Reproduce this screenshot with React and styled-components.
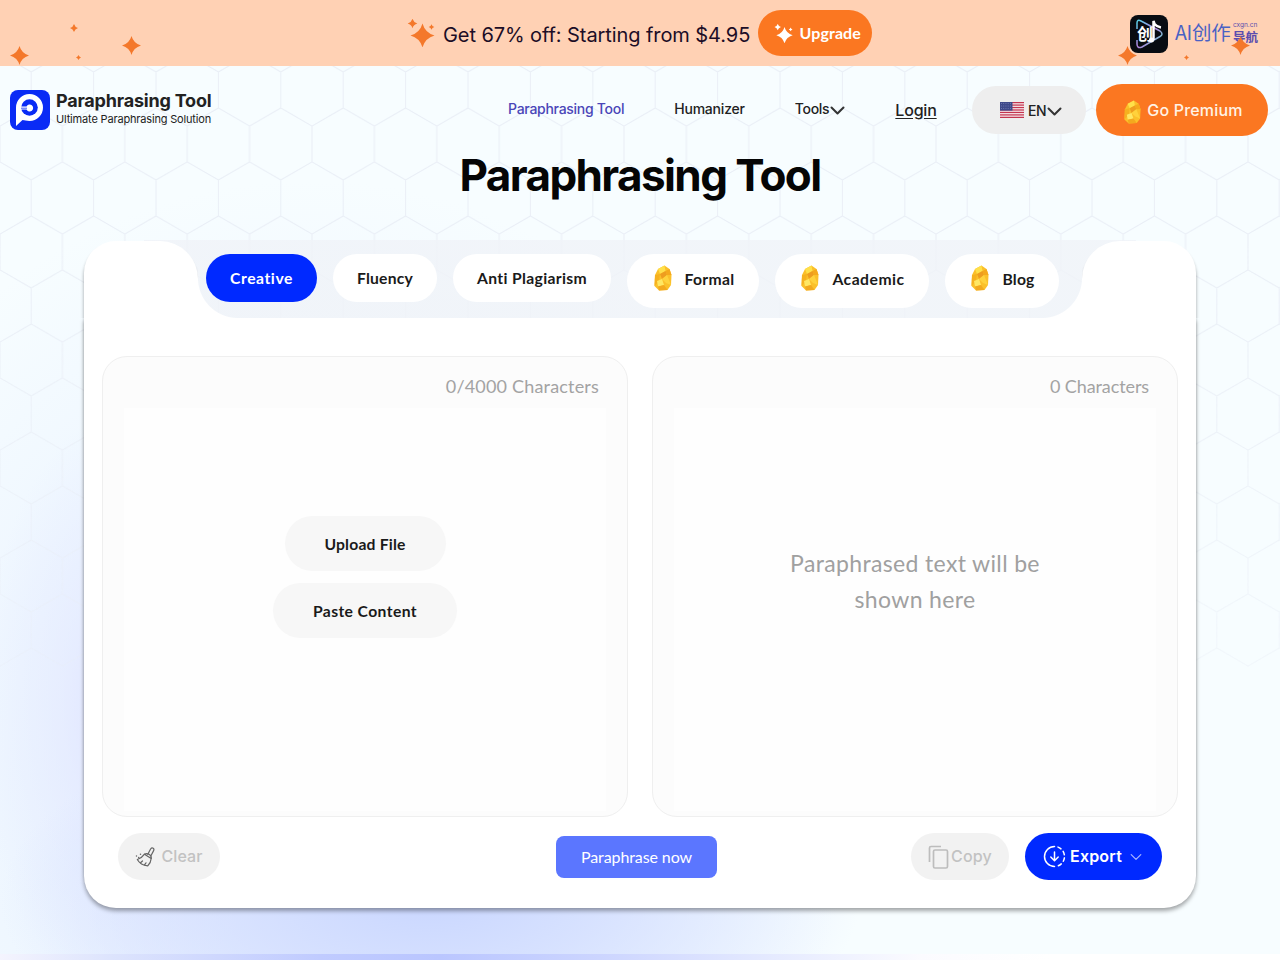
import React from "react";
import styled, { createGlobalStyle } from "styled-components";

const GlobalStyle = createGlobalStyle`
  * {
    box-sizing: border-box;
  }
  body {
    margin: 0;
    overflow: hidden;
    font-family: "Inter", "Liberation Sans", sans-serif;
    color: #222;
  }
  button {
    border: 0;
    padding: 0;
    font-family: inherit;
    cursor: pointer;
  }
  svg {
    display: block;
    flex: none;
  }
`;

/* the text faces used over and over */
const Text = styled.span`
  font-family: ${(p) => (p.$round ? '"Lato"' : '"Inter"')}, sans-serif;
  font-size: ${(p) => p.$size}px;
  font-weight: ${(p) => p.$weight || 400};
  letter-spacing: ${(p) => p.$track || 0}px;
  line-height: ${(p) => p.$line || 20}px;
  color: ${(p) => p.$color || "inherit"};
  white-space: nowrap;
`;

const Page = styled.div`
  position: relative;
  z-index: 0;
  width: 1280px;
  height: 960px;
  overflow: hidden;
  display: flex;
  flex-direction: column;
  background:
    radial-gradient(ellipse 430px 190px at 430px 900px, #cad7ff 0%, rgba(210, 221, 255, 0.8) 40%, rgba(232, 240, 255, 0) 100%),
    radial-gradient(ellipse 150px 300px at 130px 710px, #dfe3ff 0%, rgba(226, 231, 255, 0.55) 45%, rgba(236, 244, 255, 0) 100%),
    radial-gradient(ellipse 540px 600px at 310px 780px, #dfe8ff 0%, rgba(234, 243, 255, 0.8) 50%, rgba(247, 253, 255, 0) 100%),
    #f7fdff;
`;

const Backdrop = styled.svg`
  position: absolute;
  z-index: -1;
  top: 66px;
  left: 0;
`;

const Banner = styled.div`
  position: relative;
  height: 66px;
  padding: 0 0 0 407px;
  display: flex;
  align-items: center;
  background: #ffd1b4;
`;

const BannerText = styled(Text)`
  margin: 3px 8px 0 8px;
`;

const Upgrade = styled.button`
  width: 114px;
  height: 46px;
  border-radius: 23px;
  background: #fb7721;
  color: #fff;
  display: flex;
  align-items: center;
  justify-content: center;
  gap: 6px;
  padding-left: 5px;
`;

const Spark = styled.svg`
  position: absolute;
  left: ${(p) => p.$x}px;
  top: ${(p) => p.$y}px;
`;

const Partner = styled.div`
  margin-left: auto;
  margin-right: 22px;
  display: flex;
  align-items: center;
  gap: 7px;
  padding-top: 2px;
`;

const PartnerName = styled.div`
  width: 83px;
  display: flex;
  align-items: center;
  justify-content: space-between;
  color: #4a62c4;
  font-family: "Noto Sans CJK SC", sans-serif;
  font-size: 19.5px;
  line-height: 26px;
  letter-spacing: -0.3px;
  white-space: nowrap;
  padding-bottom: 5px;
`;

const PartnerSub = styled.div`
  display: flex;
  flex-direction: column;
  width: 25px;
  padding-top: 2px;
  letter-spacing: 0;
  font-weight: 700;
  font-size: 12.5px;
  line-height: 15px;
  color: #5a4cae;
  small {
    font-family: "Inter", sans-serif;
    font-weight: 400;
    font-size: 6.5px;
    line-height: 8px;
  }
`;

const Header = styled.header`
  height: 86px;
  padding: 2px 12px 0 10px;
  display: flex;
  align-items: center;
`;

const Brand = styled.div`
  display: flex;
  align-items: center;
  gap: 6px;
  width: 498px;
`;

const BrandText = styled.div`
  display: flex;
  flex-direction: column;
  margin-top: -3px;
`;

const Nav = styled.nav`
  display: flex;
  align-items: center;
  gap: 50px;
  flex: 1;
  padding-bottom: 2px;
`;

const NavItem = styled(Text)`
  display: flex;
  align-items: center;
  gap: 1px;
  svg {
    margin-top: 3px;
  }
`;

const Login = styled(Text)`
  padding-top: 1px;
  text-decoration: underline;
  text-underline-offset: 2px;
`;

const Language = styled.button`
  width: 114px;
  height: 48px;
  margin-right: 10px;
  padding-left: 4px;
  border-radius: 24px;
  background: #eeeeee;
  display: flex;
  align-items: center;
  justify-content: center;
  color: #222;
  span {
    margin: 1px 0 0 4px;
  }
  svg:last-child {
    margin: 3px 0 0 1px;
  }
`;

const Premium = styled.button`
  width: 172px;
  height: 52px;
  border-radius: 26px;
  background: #fb7721;
  display: flex;
  align-items: center;
  justify-content: center;
  gap: 5px;
  svg {
    margin: 3px 0 0 2px;
  }
`;

const Title = styled.h1`
  margin: 0;
  height: 88px;
  text-align: center;
  font-size: 44px;
  font-weight: 700;
  line-height: 46px;
  letter-spacing: -1.6px;
  color: #050505;
`;

const Card = styled.main`
  width: 1112px;
  margin: 0 auto;
`;

const Top = styled.div`
  height: 78px;
  display: flex;
  background: linear-gradient(rgba(240, 243, 248, 0.8), rgba(240, 243, 248, 0.8)) 60px 0 / 992px 78px no-repeat;
`;

const Ear = styled.div`
  width: 114px;
  height: 77px;
  margin-top: 1px;
  background: #fff;
  border-radius: ${(p) => (p.$right ? "38px 32px 0 0" : "32px 38px 0 0")};
  box-shadow: ${(p) => (p.$right ? "0.5px" : "-0.5px")} 4px 3px rgba(0, 0, 0, 0.22);
  clip-path: ${(p) => (p.$right ? "inset(0 -4px 0 0)" : "inset(0 0 0 -4px)")};
`;

/* the tab strip is cut into the card; both lower corners are filled in white */
const Tabs = styled.div`
  flex: 1;
  display: flex;
  align-items: flex-start;
  gap: 16px;
  padding: 14px 0 0 8px;
  background:
    radial-gradient(circle at 40px 0, transparent 39.5px, #fff 40.5px) left bottom / 40px 40px no-repeat,
    radial-gradient(circle at 0 0, transparent 39.5px, #fff 40.5px) right bottom / 40px 40px no-repeat;
`;

const Tab = styled.button`
  width: ${(p) => p.$width}px;
  height: ${(p) => (p.$gem ? 54 : 48)}px;
  padding: ${(p) => (p.$gem ? "0 0 4px 1px" : "0")};
  border-radius: 27px;
  background: ${(p) => (p.$active ? "#0029ff" : "#fff")};
  color: ${(p) => (p.$active ? "#fff" : "#1a1a1a")};
  display: flex;
  align-items: center;
  justify-content: center;
  gap: 12px;
  svg {
    margin-top: -2px;
  }
`;

const Body = styled.div`
  height: 590px;
  padding: 38px 18px 0;
  background: #fff;
  border-radius: 0 0 32px 32px;
  box-shadow: 0 3px 4px rgba(0, 0, 0, 0.35), 0 -5px 3px rgba(0, 0, 0, 0.2);
  clip-path: inset(0 -8px -12px -8px);
`;

const Panels = styled.div`
  display: grid;
  grid-template-columns: 1fr 1fr;
  gap: 24px;
`;

const Panel = styled.section`
  height: 461px;
  padding: 0 21px 5px;
  border: 1px solid #efefef;
  border-radius: 25px;
  background: #fcfcfc;
  display: flex;
  flex-direction: column;
`;

const Count = styled.div`
  height: 51px;
  padding: 19px 7px 0 0;
  text-align: right;
`;

const Area = styled.div`
  flex: 1;
  background: #fefefe;
  display: flex;
  flex-direction: column;
  align-items: center;
  gap: 12px;
  padding-top: ${(p) => p.$top}px;
  text-align: center;
`;

const SoftButton = styled.button`
  width: ${(p) => p.$width}px;
  height: 55px;
  border-radius: 28px;
  background: #f7f7f7;
  color: #1a1a1a;
`;

const Actions = styled.div`
  display: flex;
  align-items: center;
  padding: 16px 16px 0;
`;

const Pill = styled.button`
  width: ${(p) => p.$width}px;
  height: 47px;
  border-radius: 24px;
  background: ${(p) => (p.$primary ? "#0029ff" : "#f2f2f2")};
  color: ${(p) => (p.$primary ? "#fff" : "#c2c2c2")};
  display: flex;
  align-items: center;
  justify-content: center;
  gap: ${(p) => p.$gap}px;
  span {
    margin-top: -1px;
  }
`;

const ExportPill = styled(Pill)`
  margin-left: 16px;
  justify-content: flex-start;
  padding-left: 18px;
  svg:last-child {
    margin-left: 4px;
  }
`;

const Paraphrase = styled.button`
  width: 161px;
  height: 42px;
  margin: 0 194px 0 336px;
  border-radius: 8px;
  background: #5b76ff;
  color: #fff;
`;

const Strip = styled.div`
  position: absolute;
  left: 0;
  bottom: 0;
  width: 100%;
  height: 6px;
  background: linear-gradient(90deg, #f4f4fe 0, #dde4fd 110px, #c0cbff 320px, #bac6ff 440px, #ccd5ff 600px, #e6ebff 780px, #fbfbff 920px, #fff 1050px);
`;

const star = (x, y, r) => {
  const k = r * 0.22;
  return `M${x} ${y - r}Q${x + k} ${y - k} ${x + r} ${y}Q${x + k} ${y + k} ${x} ${y + r}Q${x - k} ${y + k} ${x - r} ${y}Q${x - k} ${y - k} ${x} ${y - r}Z`;
};

const Sparkles = ({ size, color }) => (
  <svg width={size} height={size} viewBox="0 0 28 28" fill={color}>
    <path d={star(15.5, 16.5, 12)} />
    <path d={star(5.5, 4.5, 4.8)} />
    <path d={star(24.5, 8, 2.8)} />
  </svg>
);

const Star = ({ x, y, r }) => (
  <Spark $x={x - r} $y={y - r} width={r * 2} height={r * 2} viewBox={`0 0 ${r * 2} ${r * 2}`} fill="#f4782b">
    <path d={star(r, r, r)} />
  </Spark>
);

const Hexagons = () => (
  <Backdrop width="1280" height="601">
    <defs>
      <pattern id="hex" width="62.4" height="108" x="0" y="6" patternUnits="userSpaceOnUse">
        <path
          d="M31.2 0V36L62.4 54V90L31.2 108M31.2 36L0 54V90L31.2 108M0 -18L31.2 0L62.4 -18"
          fill="none"
          stroke="#e9eef6"
          strokeWidth="1"
        />
      </pattern>
      <linearGradient id="fade" x2="0" y2="1">
        <stop offset="0.3" stopColor="#fff" />
        <stop offset="1" stopColor="#fff" stopOpacity="0.4" />
      </linearGradient>
      <mask id="fadeMask">
        <rect width="1280" height="601" fill="url(#fade)" />
      </mask>
    </defs>
    <rect width="1280" height="601" fill="url(#hex)" mask="url(#fadeMask)" />
  </Backdrop>
);

const LogoMark = () => (
  <svg width="40" height="40" viewBox="0 0 40 40">
    <rect width="40" height="40" rx="8" fill="#0a2bf5" />
    <path d="M6 36V17.5A13.5 13.5 0 1 1 19.5 31C16.500 31 14.500 30 12.500 30Z" fill="#fff" />
    <circle cx="19.500" cy="17.500" r="8.300" fill="#0a2bf5" />
    <path d="M11 16.500H16.500A3.500 3.500 0 1 1 16.500 19.500H11Z" fill="#fff" />
    <path d="M11 18.200H17" stroke="#0a2bf5" strokeWidth="0.800" />
  </svg>
);

const Gem = ({ width = 20, height = 26 }) => (
  <svg width={width} height={height} viewBox="0 0 20 26" preserveAspectRatio="none">
    <path d="M11.500 0.500L16.500 4L18.500 10L18 20L14.500 25L6 25.500L1.500 21L2 10L5 4Z" fill="#fbc02a" />
    <path d="M11.500 0.500L12.500 6L7 9L5 4Z" fill="#ffe04a" />
    <path d="M12.500 6L16.500 4L18.500 10L14 10Z" fill="#f5a81c" />
    <path d="M7 9L12.500 6L14 10L9 14Z" fill="#ee9d1f" />
    <path d="M2 10L7 9L6 16L1.500 21Z" fill="#f6b11f" />
    <path d="M9 14L14 10L18 20L13 18Z" fill="#ffd23c" />
    <path d="M4 16L9 14L11 20L5 21.500Z" fill="#ffe763" />
    <path d="M5 21.500L11 20L14.500 25L6 25.500Z" fill="#f3a91e" />
  </svg>
);

const Chevron = ({ size = 15, color = "#333", width = 2 }) => (
  <svg width={size} height={size} viewBox="0 0 15 15" fill="none" stroke={color} strokeWidth={width}>
    <path d="M1.500 4.500L7.500 10.500L13.500 4.500" strokeLinecap="round" strokeLinejoin="round" />
  </svg>
);

const Flag = () => (
  <svg width="24" height="16" viewBox="0 0 25 16" preserveAspectRatio="none">
    <rect width="25" height="16" rx="1.500" fill="#f6e9ec" />
    {[0, 1, 2, 3, 4, 5, 6].map((i) => (
      <rect key={i} y={i * 2.46} width="25" height="1.230" fill="#c4344f" />
    ))}
    <rect width="13" height="8.600" fill="#3f4a8a" />
    {[1.5, 4, 6.5].map((y) => (
      <path key={y} d={`M1.200 ${y}H12`} stroke="#8c94c4" strokeWidth="0.800" strokeDasharray="0.800 1.500" />
    ))}
  </svg>
);

const Broom = () => (
  <svg width="20" height="20" viewBox="0 0 20 20" fill="none" stroke="#666" strokeWidth="1.200" strokeLinecap="round" strokeLinejoin="round">
    <path d="M12.800 7.300L15.600 2Q16.800 0.300 18.200 1.200Q19.500 2.200 18.500 3.900L15.800 9" />
    <path d="M9.500 7.200Q11.500 5.800 14 7.300Q16.800 9 16.200 11.500L9.500 7.200Z" />
    <path d="M9.500 7.200Q7 11 2.300 12.500Q5.500 18.200 12.800 18.800Q15.800 16 16.200 11.500" />
    <path d="M5.500 15.800L7.500 14M9.500 17.800L11 15.800" />
    <path d="M5.500 7.200V7.300M1.500 9V9.100M3.700 10.500V10.600" strokeWidth="1.500" />
  </svg>
);

const CopyIcon = () => (
  <svg width="21" height="24" viewBox="0 0 21 24" fill="none" stroke="#bdbdbd" strokeWidth="1.700">
    <path d="M1.500 17V3Q1.500 1.500 3 1.500H13" />
    <rect x="5.500" y="5" width="14" height="18" rx="1.500" />
  </svg>
);

const ExportIcon = () => (
  <svg width="23" height="23" viewBox="0 0 23 23" fill="none" stroke="#fff" strokeWidth="1.500" strokeLinecap="round" strokeLinejoin="round">
    <path d="M11.500 1.500A10 10 0 0 0 11.500 21.500" />
    <path d="M15 2.100A10 10 0 0 1 21.500 11.500A10 10 0 0 1 15 20.900" strokeDasharray="3.500 3.200" />
    <path d="M11.500 7V15.500M7.800 12L11.500 15.700L15.200 12" />
  </svg>
);

const PartnerMark = () => (
  <svg width="38" height="38" viewBox="0 0 38 38">
    <defs>
      <linearGradient id="neon" x1="0" y1="0" x2="1" y2="1">
        <stop offset="0" stopColor="#55d4e8" />
        <stop offset="0.500" stopColor="#b583e0" />
        <stop offset="1" stopColor="#57e0c4" />
      </linearGradient>
    </defs>
    <rect width="38" height="38" rx="8" fill="#080c12" />
    <path d="M7 14V8Q7 4 11 6L30 16Q34 19 30 21.500L12 32Q7 34 7 29V25" fill="none" stroke="url(#neon)" strokeWidth="1.500" />
    <text x="7" y="25" fontSize="16" fontWeight="700" fontFamily="Noto Sans CJK SC" fill="#fff">创</text>
    <path d="M23.500 25V6L24.500 9Q27 12 31 12.500" fill="none" stroke="#fff" strokeWidth="2.500" />
    <circle cx="21.500" cy="25" r="2.500" fill="#fff" />
  </svg>
);

const tabs = [
  { label: "Creative", width: 111, active: true, track: 0.55 },
  { label: "Fluency", width: 104, track: 0.2 },
  { label: "Anti Plagiarism", width: 158, track: 0.35 },
  { label: "Formal", width: 132, gem: true, track: 0.3 },
  { label: "Academic", width: 154, gem: true, track: 0.5 },
  { label: "Blog", width: 114, gem: true, track: 0.2 },
];

const App = () => {
  return (
    <Page>
      <GlobalStyle />
      <Hexagons />

      <Banner>
        <Sparkles size={28} color="#f4782b" />
        <BannerText $size={20} $track={-0.08} $line={26} $color="#1c0d26">
          Get 67% off: Starting from $4.95
        </BannerText>
        <Upgrade>
          <Sparkles size={19} color="#fff" />
          <Text $round $size={16} $weight={700} $track={0.1}>Upgrade</Text>
        </Upgrade>
        <Partner>
          <PartnerMark />
          <PartnerName>
            AI创作
            <PartnerSub>
              <small>cxgn.cn</small>
              <span>导航</span>
            </PartnerSub>
          </PartnerName>
        </Partner>
        <Star x={19} y={55} r={9.5} />
        <Star x={73.5} y={27.5} r={4} />
        <Star x={78.5} y={57.5} r={2.5} />
        <Star x={131.5} y={45.5} r={9.5} />
        <Star x={1127.5} y={55} r={9.5} />
        <Star x={1186.5} y={57.5} r={2.5} />
        <Star x={1240} y={45.5} r={9.5} />
      </Banner>

      <Header>
        <Brand>
          <LogoMark />
          <BrandText>
            <Text $size={18} $weight={700} $track={-0.2} $line={21}>Paraphrasing Tool</Text>
            <Text $size={11} $track={-0.17} $line={16}>Ultimate Paraphrasing Solution</Text>
          </BrandText>
        </Brand>
        <Nav>
          <NavItem $size={14} $weight={500} $track={-0.28} $color="#4a46b8">Paraphrasing Tool</NavItem>
          <NavItem $size={14} $weight={500} $track={-0.2}>Humanizer</NavItem>
          <NavItem $size={14} $weight={500} $track={-0.3}>
            Tools <Chevron />
          </NavItem>
          <Login $size={16} $weight={500} $track={-0.2}>Login</Login>
        </Nav>
        <Language>
          <Flag />
          <Text $size={14} $weight={500} $track={-0.5}>EN</Text>
          <Chevron />
        </Language>
        <Premium>
          <Gem width={19} height={24} />
          <Text $size={16} $weight={500} $track={0.2} $color="#fff3e6">Go Premium</Text>
        </Premium>
      </Header>

      <Title>Paraphrasing Tool</Title>

      <Card>
        <Top>
          <Ear />
          <Tabs>
            {tabs.map((tab) => (
              <Tab key={tab.label} $width={tab.width} $active={tab.active} $gem={tab.gem}>
                {tab.gem && <Gem />}
                <Text $round $size={15.7} $weight={700} $track={tab.track}>{tab.label}</Text>
              </Tab>
            ))}
          </Tabs>
          <Ear $right />
        </Top>
        <Body>
          <Panels>
            <Panel>
              <Count>
                <Text $round $size={18} $track={0.18} $color="#a3a3a3">0/4000 Characters</Text>
              </Count>
              <Area $top={108}>
                <SoftButton $width={161}>
                  <Text $round $size={15.7} $weight={700} $track={0.2}>Upload File</Text>
                </SoftButton>
                <SoftButton $width={184}>
                  <Text $round $size={15.7} $weight={700} $track={0.4}>Paste Content</Text>
                </SoftButton>
              </Area>
            </Panel>
            <Panel>
              <Count>
                <Text $round $size={18} $track={-0.1} $color="#a3a3a3">0 Characters</Text>
              </Count>
              <Area $top={137}>
                <Text $round $size={23} $track={0.35} $line={36} $color="#a0a0a0">
                  Paraphrased text will be
                  <br />
                  shown here
                </Text>
              </Area>
            </Panel>
          </Panels>
          <Actions>
            <Pill $width={102} $gap={6}>
              <Broom />
              <Text $size={16} $weight={500} $track={0.1}>Clear</Text>
            </Pill>
            <Paraphrase>
              <Text $round $size={16} $track={-0.1}>Paraphrase now</Text>
            </Paraphrase>
            <Pill $width={98} $gap={2}>
              <CopyIcon />
              <Text $size={16} $weight={500} $track={0.2}>Copy</Text>
            </Pill>
            <ExportPill $width={137} $gap={4} $primary>
              <ExportIcon />
              <Text $size={16} $weight={600} $track={0.2}>Export</Text>
              <Chevron size={12} color="#aab6ff" width={1.5} />
            </ExportPill>
          </Actions>
        </Body>
      </Card>
      <Strip />
    </Page>
  );
};

export default App;
